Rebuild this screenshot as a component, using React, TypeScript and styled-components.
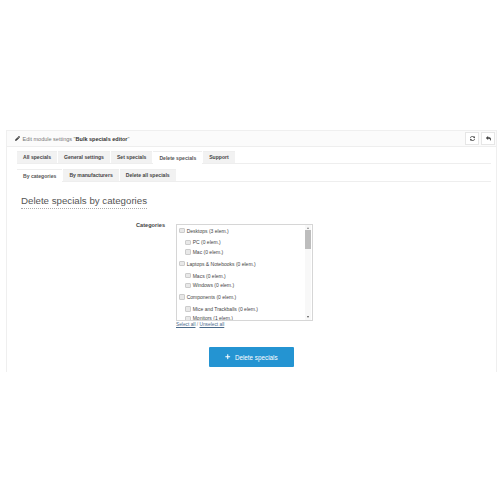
import styled, { createGlobalStyle } from "styled-components";
import { FaPencilAlt, FaPlus, FaReply, FaSyncAlt } from "react-icons/fa";

const Global = createGlobalStyle`
  html, body {
    margin: 0;
    padding: 0;
    background: #fff;
    font-family: "Liberation Sans", Arial, sans-serif;
  }
`;

const Page = styled.div`
  width: 500px;
  height: 500px;
  overflow: hidden;
  padding: 130px 3px 0 6px;
  box-sizing: border-box;
`;

const Panel = styled.div`
  height: 242px;
  border: 1px solid #efefef;
  border-bottom: 0;
  box-sizing: border-box;
`;

const Heading = styled.div`
  height: 15px;
  background: #fbfbfb;
  border-bottom: 1px solid #eee;
  display: flex;
  align-items: center;
  justify-content: space-between;
  padding: 0 1px 0 8px;
  font-size: 5.5px;
  color: #777;

  b {
    color: #333;
  }

  svg {
    font-size: 5px;
    color: #333;
    margin-right: 1px;
    vertical-align: -0.5px;
  }
`;

const Tools = styled.div`
  display: flex;
  gap: 2px;
`;

const ToolButton = styled.div`
  width: 14px;
  height: 13px;
  background: #fff;
  border: 1px solid #e6e6e6;
  box-sizing: border-box;
  display: flex;
  align-items: center;
  justify-content: center;

  svg {
    margin: 0;
    font-size: 5px;
    color: #444;
  }
`;

const Body = styled.div`
  padding: 3.5px 5px 0 10px;
`;

const TabRow = styled.div`
  display: flex;
  height: 12.5px;
  border-bottom: 1px solid #eee;
  margin-bottom: 4.5px;
`;

const Tab = styled.div<{ $active?: boolean }>`
  display: flex;
  align-items: center;
  padding: 0 6px;
  margin-right: 1px;
  font-size: 5.1px;
  font-weight: 700;
  color: ${(p) => (p.$active ? "#555" : "#444")};
  background: ${(p) => (p.$active ? "#fff" : "#f2f2f2")};
  height: ${(p) => (p.$active ? 13.5 : 12.5)}px;
  border-top: 1px solid #eee;
  box-sizing: border-box;
`;

const Title = styled.h2`
  display: block;
  width: fit-content;
  margin: 12px 0 0 4px;
  padding-bottom: 1px;
  font-size: 9.7px;
  line-height: 13px;
  font-weight: 400;
  color: #555;
  border-bottom: 1px dotted #aaa;
`;

const FormRow = styled.div`
  display: flex;
  margin-top: 15px;
`;

const Label = styled.div`
  width: 148px;
  margin-top: -2px;
  text-align: right;
  font-size: 5.6px;
  font-weight: 700;
  color: #444;
`;

const Field = styled.div`
  margin-left: 11px;
`;

const ListBox = styled.div`
  width: 137px;
  height: 97px;
  border: 1px solid #d6d6d6;
  box-sizing: border-box;
  display: flex;
  overflow: hidden;
`;

const Items = styled.div`
  flex: 1;
  overflow: hidden;
`;

const Item = styled.div<{ $child?: boolean }>`
  display: flex;
  align-items: center;
  gap: 2.2px;
  height: ${(p) => (p.$child ? 9.7 : 11)}px;
  margin-top: ${(p) => (p.$child ? 0 : 1.15)}px;
  margin-bottom: ${(p) => (p.$child ? 0 : 1.65)}px;
  padding-left: ${(p) => (p.$child ? 8 : 2)}px;
  font-size: 5px;
  color: #444;
  white-space: nowrap;

  &:first-child {
    margin-top: 0;
  }
`;

const Check = styled.span`
  width: 5.5px;
  height: 5.5px;
  flex: none;
  box-sizing: border-box;
  background: #e8e8e8;
  border: 1px solid #ccc;
  border-radius: 1px;
`;

const Scrollbar = styled.div`
  width: 6px;
  margin-right: 1px;
  flex: none;
  background: #f8f8f8;
  display: flex;
  flex-direction: column;
  align-items: center;
  padding: 2px 0;
  box-sizing: border-box;
`;

const Thumb = styled.div`
  width: 6px;
  height: 19px;
  margin-top: 1px;
  margin-bottom: auto;
  background: #bdbdbd;
`;

const Arrow = styled.span<{ $up?: boolean }>`
  width: 0;
  height: 0;
  border-left: 1.5px solid transparent;
  border-right: 1.5px solid transparent;
  ${(p) => (p.$up ? "border-bottom: 2px solid #888;" : "border-top: 2px solid #555;")}
`;

const SelectLinks = styled.div`
  margin-top: 1px;
  font-size: 4.8px;
  line-height: 6px;
  color: #888;

  a {
    color: #4a6a8a;
    text-decoration: underline;
  }
`;

const Actions = styled.div`
  display: flex;
  justify-content: center;
  margin-top: 19px;
  padding-right: 5px;
`;

const SubmitButton = styled.button`
  width: 85px;
  height: 20px;
  border: 0;
  border-radius: 1px;
  background: #2494d2;
  color: #fff;
  font-family: inherit;
  font-size: 6.3px;
  display: flex;
  align-items: center;
  justify-content: center;
  gap: 4px;
  padding: 0;

  svg {
    font-size: 5.5px;
  }
`;

const categories = [
  { name: "Desktops (3 elem.)" },
  { name: "PC (0 elem.)", child: true },
  { name: "Mac (0 elem.)", child: true },
  { name: "Laptops & Notebooks (0 elem.)" },
  { name: "Macs (0 elem.)", child: true },
  { name: "Windows (0 elem.)", child: true },
  { name: "Components (0 elem.)" },
  { name: "Mice and Trackballs (0 elem.)", child: true },
  { name: "Monitors (1 elem.)", child: true },
];

export default function App() {
  return (
    <Page>
      <Global />
      <Panel>
        <Heading>
          <span>
            <FaPencilAlt /> Edit module settings "<b>Bulk specials editor</b>"
          </span>
          <Tools>
            <ToolButton>
              <FaSyncAlt />
            </ToolButton>
            <ToolButton>
              <FaReply />
            </ToolButton>
          </Tools>
        </Heading>
        <Body>
          <TabRow>
            <Tab>All specials</Tab>
            <Tab>General settings</Tab>
            <Tab>Set specials</Tab>
            <Tab $active>Delete specials</Tab>
            <Tab>Support</Tab>
          </TabRow>
          <TabRow>
            <Tab $active>By categories</Tab>
            <Tab>By manufacturers</Tab>
            <Tab>Delete all specials</Tab>
          </TabRow>
          <Title>Delete specials by categories</Title>
          <FormRow>
            <Label>Categories</Label>
            <Field>
              <ListBox>
                <Items>
                  {categories.map((c) => (
                    <Item key={c.name} $child={c.child}>
                      <Check />
                      {c.name}
                    </Item>
                  ))}
                </Items>
                <Scrollbar>
                  <Arrow $up />
                  <Thumb />
                  <Arrow />
                </Scrollbar>
              </ListBox>
              <SelectLinks>
                <a>Select all</a> / <a>Unselect all</a>
              </SelectLinks>
            </Field>
          </FormRow>
          <Actions>
            <SubmitButton>
              <FaPlus /> Delete specials
            </SubmitButton>
          </Actions>
        </Body>
      </Panel>
    </Page>
  );
}
